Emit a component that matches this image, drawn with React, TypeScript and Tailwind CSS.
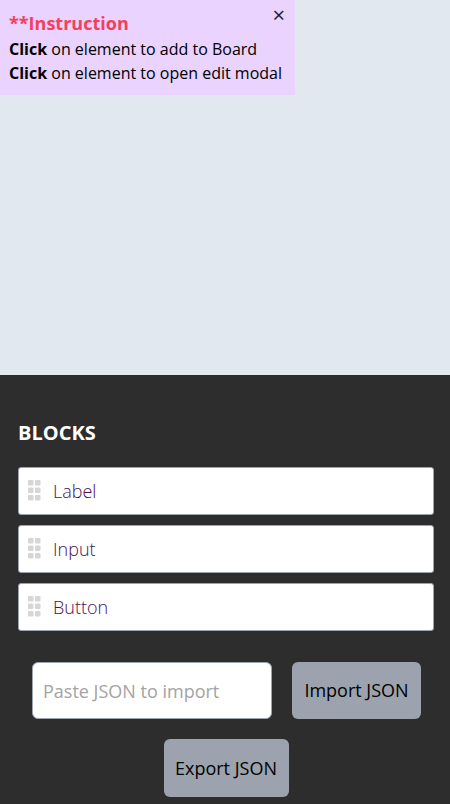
function DragHandle() {
  return (
    <svg width="14" height="22" viewBox="0 0 14 22" className="shrink-0">
      {[0, 1, 2].map((r) =>
        [0, 1].map((c) => (
          <rect key={`${r}-${c}`} x={c * 7} y={r * 7.5} width="5.5" height="5.5" rx="1" fill="#d6d6d6" />
        ))
      )}
    </svg>
  );
}

const blocks = ["Label", "Input", "Button"];

export default function App() {
  return (
    <div className="flex flex-col h-[804px] w-[450px] bg-[#e2e8f0] font-['Open_Sans','Noto_Sans',sans-serif]">
      {/* Board */}
      <div className="h-[375px] shrink-0">
        <div className="relative w-[295px] h-[95px] bg-[#ead3fe] px-[9px] pt-[11px]">
          <button className="absolute right-[10px] top-[3px] text-[22px] text-[#1e1b3a] leading-none">×</button>
          <div className="text-[18px] font-bold text-[#f43f5e] leading-[24px]">**Instruction</div>
          <div className="text-[16px] text-black leading-[24px] mt-[2px]">
            <span className="font-bold">Click</span> on element to add to Board
          </div>
          <div className="text-[16px] text-black leading-[24px]">
            <span className="font-bold">Click</span> on element to open edit modal
          </div>
        </div>
      </div>

      {/* Blocks panel */}
      <div className="flex-1 bg-[#2d2d2d] pl-[18px] pr-[16px] pt-[44px]">
        <h2 className="text-[20px] font-bold text-white leading-[28px] mb-[20px]">BLOCKS</h2>
        <div className="flex flex-col gap-[10px]">
          {blocks.map((b) => (
            <div
              key={b}
              className="flex items-center gap-[11px] h-[48px] bg-white border border-[#9ca3af] rounded-[3px] pl-[9px]"
            >
              <DragHandle />
              <span className="text-[18px] font-light text-[#4a0f55]">{b}</span>
            </div>
          ))}
        </div>

        <div className="flex items-center gap-[20px] mt-[31px] pl-[14px]">
          <input
            placeholder="Paste JSON to import"
            className="w-[240px] h-[57px] bg-white border border-[#9ca3af] rounded-[6px] px-[10px] text-[18px] placeholder:text-[#a3a3a3] outline-none"
          />
          <button className="w-[129px] h-[57px] bg-[#9ca3af] rounded-[6px] text-[18px] text-black">
            Import JSON
          </button>
        </div>
        <div className="flex justify-center mt-[20px]">
          <button className="w-[125px] h-[58px] bg-[#9ca3af] rounded-[6px] text-[18px] text-black">
            Export JSON
          </button>
        </div>
      </div>
    </div>
  );
}
